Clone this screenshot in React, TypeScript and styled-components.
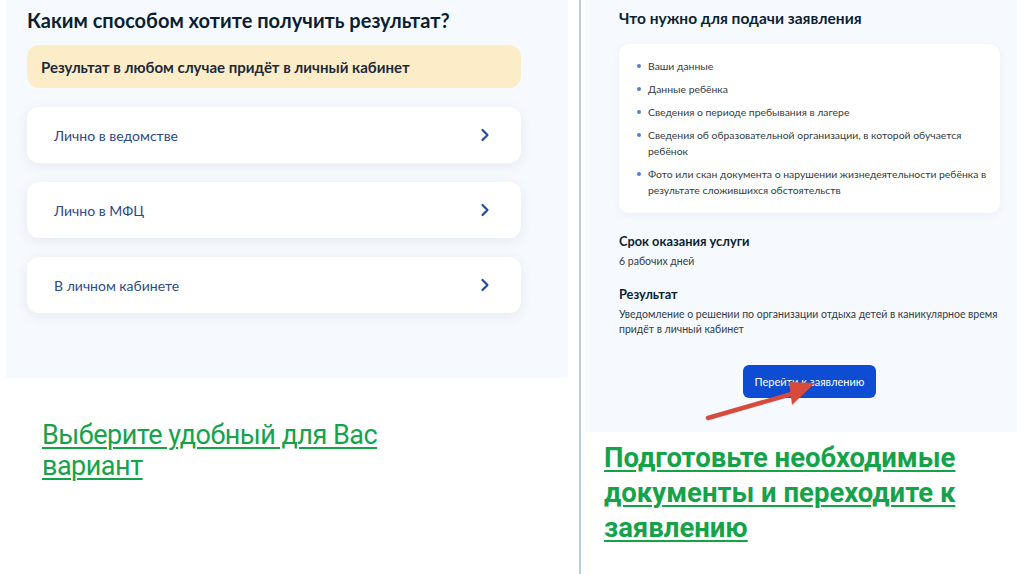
import styled, { createGlobalStyle } from "styled-components";
import { ChevronRight } from "lucide-react";

const GlobalStyle = createGlobalStyle`
  html, body {
    margin: 0;
    padding: 0;
    background: #ffffff;
  }
  body {
    font-family: Lato, "Open Sans", sans-serif;
  }
  * {
    box-sizing: border-box;
  }
`;

const Page = styled.div`
  display: flex;
  width: 1024px;
  height: 574px;
  overflow: hidden;
`;

const Column = styled.div<{ $width: number; $padLeft: number }>`
  display: flex;
  flex-direction: column;
  width: ${(p) => p.$width}px;
  padding-left: ${(p) => p.$padLeft}px;
  flex-shrink: 0;
`;

const Divider = styled.div`
  width: 2px;
  height: 574px;
  background: #bccbe3;
  flex-shrink: 0;
`;

const LeftPanel = styled.div`
  width: 562px;
  height: 378px;
  background: #f6f9fd;
  padding: 8px 47px 0 21px;
  display: flex;
  flex-direction: column;
`;

const Title = styled.h1`
  margin: 0;
  font-family: Lato, sans-serif;
  font-size: 20px;
  font-weight: 700;
  color: #0b1f33;
  line-height: 24px;
`;

const Banner = styled.div`
  margin-top: 13px;
  height: 43px;
  background: #fdecc8;
  border-radius: 12px;
  display: flex;
  align-items: center;
  padding: 0 14px;
  font-size: 15px;
  font-weight: 700;
  color: #1c2a3a;
`;

const OptionList = styled.div`
  margin-top: 19px;
  display: flex;
  flex-direction: column;
  gap: 19px;
`;

const OptionCard = styled.div`
  height: 56px;
  background: #ffffff;
  border-radius: 12px;
  box-shadow: 0 3px 14px rgba(30, 60, 110, 0.07);
  display: flex;
  align-items: center;
  justify-content: space-between;
  padding: 0 26px 0 27px;
  font-size: 14px;
  color: #2b4a8b;
`;

const Chevron = styled(ChevronRight)`
  color: #1f4ca8;
`;

const LeftCaption = styled.div`
  margin-top: 42px;
  padding-left: 36px;
  width: 390px;
  font-family: Roboto, "Liberation Sans", sans-serif;
  font-size: 27px;
  letter-spacing: -0.5px;
  line-height: 31px;
  color: #15a34a;
  text-decoration: underline;
  text-decoration-thickness: 2px;
  text-underline-offset: 3px;
`;

const RightPanel = styled.div`
  position: relative;
  width: 432px;
  height: 432px;
  background: #f6f9fd;
  padding: 9px 17px 0 34px;
  display: flex;
  flex-direction: column;
`;

const SubTitle = styled.h2`
  margin: 0;
  font-size: 15.5px;
  font-weight: 700;
  color: #0b1f33;
  line-height: 18px;
`;

const DocsCard = styled.div`
  margin-top: 17px;
  background: #ffffff;
  border-radius: 10px;
  box-shadow: 0 2px 10px rgba(30, 60, 110, 0.05);
  padding: 14px 10px 15px 18px;
  display: flex;
  flex-direction: column;
  gap: 7px;
`;

const DocItem = styled.div`
  display: flex;
  gap: 7px;
  font-size: 10.4px;
  line-height: 16px;
  color: #333b45;
`;

const Dot = styled.span`
  width: 4px;
  height: 4px;
  border-radius: 50%;
  background: #4f7fdc;
  margin-top: 6px;
  flex-shrink: 0;
`;

const InfoBlock = styled.div<{ $top: number }>`
  display: flex;
  flex-direction: column;
  gap: 5px;
  margin-top: ${(p) => p.$top}px;
`;

const InfoTitle = styled.div`
  font-size: 12.8px;
  font-weight: 700;
  color: #0b1f33;
  line-height: 16px;
`;

const InfoText = styled.div`
  font-size: 10.5px;
  line-height: 15px;
  color: #333b45;
`;

const ButtonRow = styled.div`
  display: flex;
  justify-content: center;
  margin-top: 28px;
`;

const PrimaryButton = styled.button`
  width: 133px;
  height: 33px;
  border: 0;
  border-radius: 6px;
  background: #0d4cd3;
  color: #ffffff;
  font-family: Lato, sans-serif;
  font-size: 11px;
  cursor: pointer;
`;

const Arrow = styled.svg`
  position: absolute;
  left: 118px;
  top: 372px;
  overflow: visible;
`;

const RightCaption = styled.div`
  margin-top: 8px;
  padding-left: 19px;
  width: 390px;
  font-family: Roboto, "Liberation Sans", sans-serif;
  font-size: 27.5px;
  font-weight: 700;
  letter-spacing: 0;
  line-height: 35px;
  color: #15a34a;
  text-decoration: underline;
  text-decoration-thickness: 2px;
  text-underline-offset: 3px;
`;

const options = ["Лично в ведомстве", "Лично в МФЦ", "В личном кабинете"];

const docs = [
  "Ваши данные",
  "Данные ребёнка",
  "Сведения о периоде пребывания в лагере",
  "Сведения об образовательной организации, в которой обучается ребёнок",
  "Фото или скан документа о нарушении жизнедеятельности ребёнка в результате сложившихся обстоятельств",
];

export default function App() {
  return (
    <>
      <GlobalStyle />
      <Page>
        <Column $width={579} $padLeft={6}>
          <LeftPanel>
            <Title>Каким способом хотите получить результат?</Title>
            <Banner>Результат в любом случае придёт в личный кабинет</Banner>
            <OptionList>
              {options.map((o) => (
                <OptionCard key={o}>
                  <span>{o}</span>
                  <Chevron size={20} strokeWidth={2.6} />
                </OptionCard>
              ))}
            </OptionList>
          </LeftPanel>
          <LeftCaption>Выберите удобный для Вас вариант</LeftCaption>
        </Column>
        <Divider />
        <Column $width={443} $padLeft={4}>
          <RightPanel>
            <SubTitle>Что нужно для подачи заявления</SubTitle>
            <DocsCard>
              {docs.map((d) => (
                <DocItem key={d}>
                  <Dot />
                  <span>{d}</span>
                </DocItem>
              ))}
            </DocsCard>
            <InfoBlock $top={20}>
              <InfoTitle>Срок оказания услуги</InfoTitle>
              <InfoText>6 рабочих дней</InfoText>
            </InfoBlock>
            <InfoBlock $top={17}>
              <InfoTitle>Результат</InfoTitle>
              <InfoText>
                Уведомление о решении по организации отдыха детей в каникулярное время придёт в личный кабинет
              </InfoText>
            </InfoBlock>
            <ButtonRow>
              <PrimaryButton>Перейти к заявлению</PrimaryButton>
            </ButtonRow>
            <Arrow width="120" height="50" viewBox="0 0 120 50">
              <line x1="5" y1="46" x2="92" y2="21" stroke="#d64b3b" strokeWidth="4.5" strokeLinecap="round" />
              <polygon points="86,10 112,11 89,33" fill="#d64b3b" />
            </Arrow>
          </RightPanel>
          <RightCaption>Подготовьте необходимые документы и переходите к заявлению</RightCaption>
        </Column>
      </Page>
    </>
  );
}
